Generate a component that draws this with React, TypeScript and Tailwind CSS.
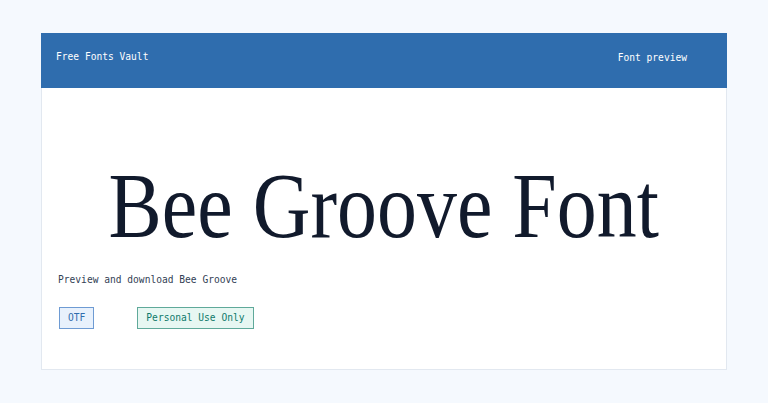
import React from "react";

const mono = "font-['DejaVu_Sans_Mono','Liberation_Mono',monospace]";

function Badge({ label, tone }: { label: string; tone: "blue" | "green" }) {
  const styles =
    tone === "blue"
      ? "bg-[#e8f1fc] border-[#6e9bd3] text-[#2f6dae] px-[8px]"
      : "bg-[#e7f7f2] border-[#5fa99a] text-[#0f7a6a] px-[8px]";
  return (
    <span
      className={`inline-flex h-[22px] items-center border text-[9.6px] ${mono} ${styles}`}
    >
      {label}
    </span>
  );
}

export default function App() {
  return (
    <div className="min-h-[403px] w-full bg-[#f5f9fe] pt-[33px]">
      <div className="mx-auto w-[686px]">
        <header
          className={`flex h-[55px] items-start justify-between bg-[#2f6dae] pl-[15px] pr-[40px] pt-[17px] text-[9.6px] leading-[14px] text-white ${mono}`}
        >
          <span>Free Fonts Vault</span>
          <span className="mt-px">Font preview</span>
        </header>
        <main className="border-x border-b border-[#e2e8f0] bg-white px-[16px] pb-[40px] pt-[70px]">
          <h1 className="flex justify-center font-['Liberation_Serif',serif] text-[94px] leading-none text-[#111a2c]">
            <span className="inline-block scale-x-85 whitespace-nowrap">
              Bee Groove Font
            </span>
          </h1>
          <p
            className={`mt-[21px] text-[9.6px] leading-[14px] text-[#334155] ${mono}`}
          >
            Preview and download Bee Groove
          </p>
          <div className="mt-[20px] flex gap-[43px] pl-[1px]">
            <Badge label="OTF" tone="blue" />
            <Badge label="Personal Use Only" tone="green" />
          </div>
        </main>
      </div>
    </div>
  );
}
